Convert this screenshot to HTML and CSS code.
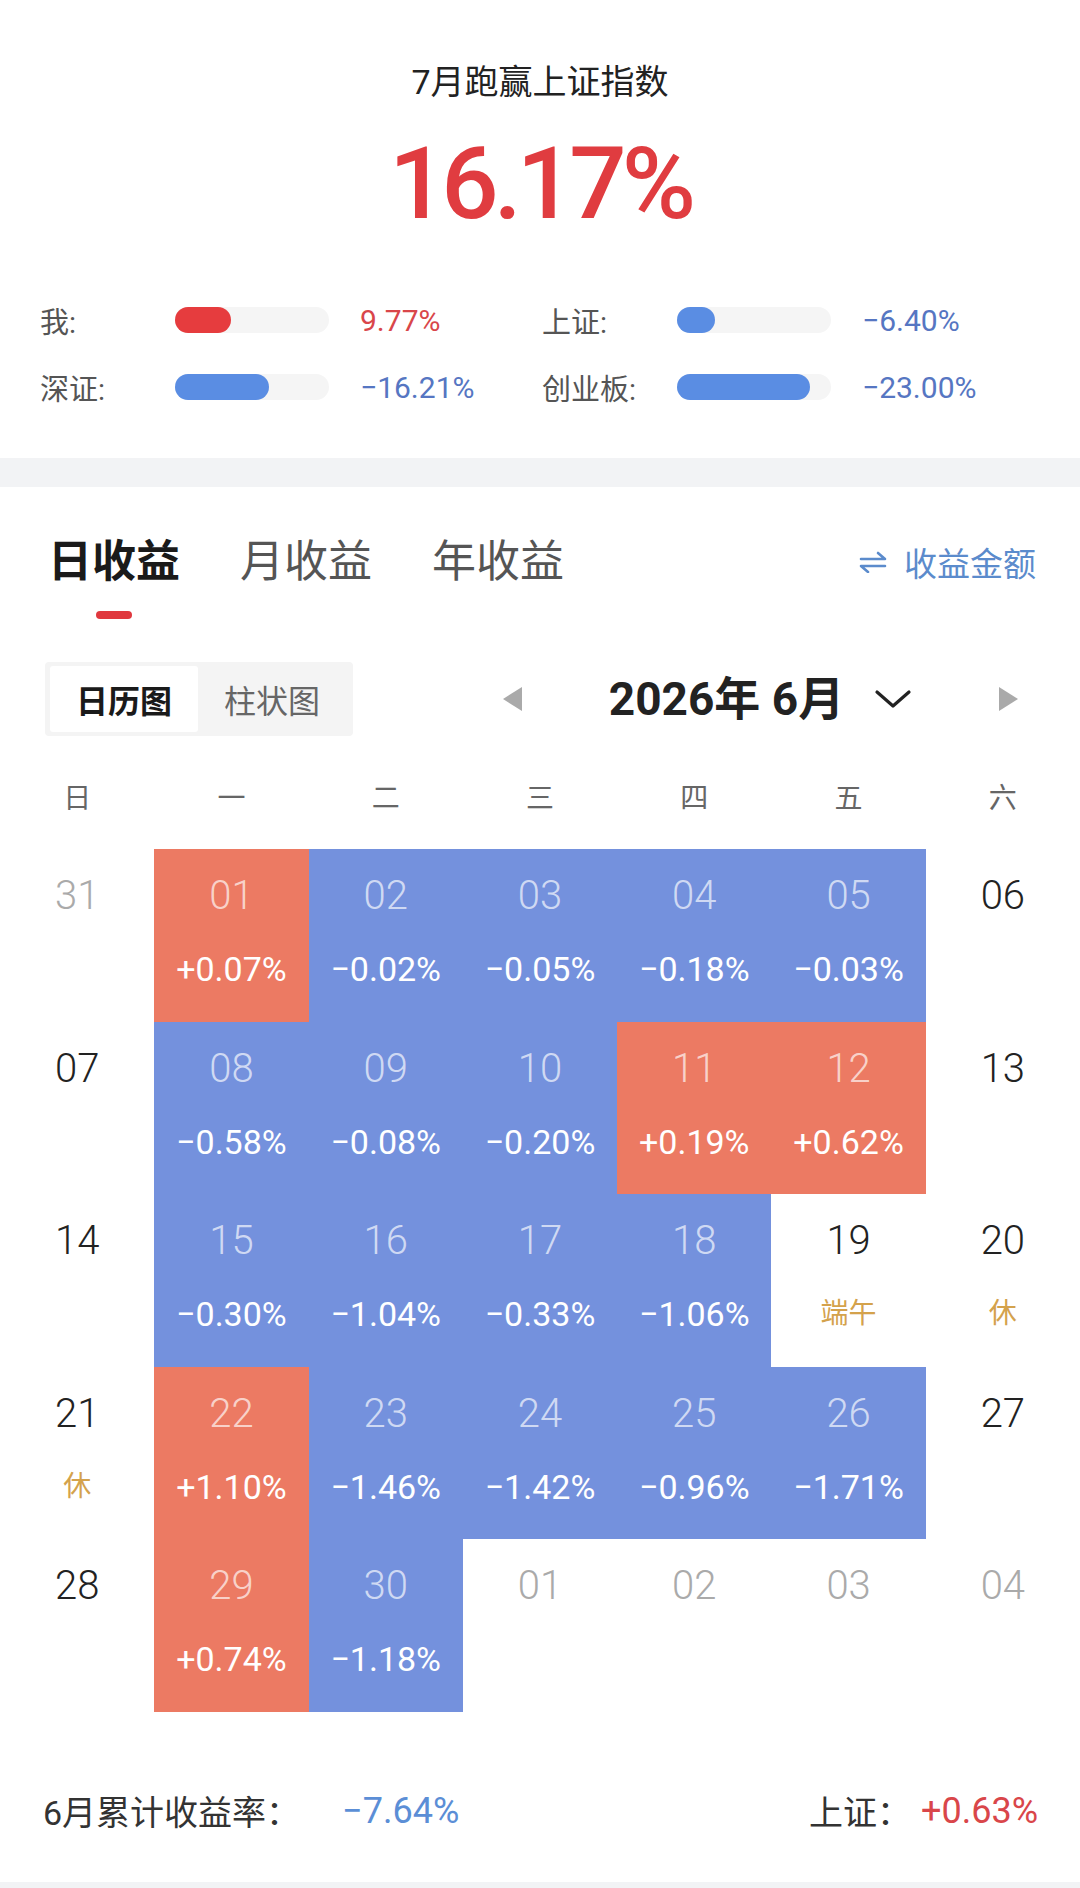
FILE: index.html
```html
<!DOCTYPE html>
<html lang="zh-CN">
<head>
<meta charset="utf-8">
<title>7月跑赢上证指数</title>
<link rel="stylesheet" href="styles.css">
</head>
<body>
<div class="page">
  <section class="summary">
    <div class="summary-title">7月跑赢上证指数</div>
    <div class="summary-value">16.17%</div>
    <div class="stats">
      <div class="stat">
        <span class="stat-label">我:</span>
        <span class="track"><span class="fill fill-red" style="width:56px"></span></span>
        <span class="stat-value up">9.77%</span>
      </div>
      <div class="stat">
        <span class="stat-label">上证:</span>
        <span class="track"><span class="fill fill-blue" style="width:38px"></span></span>
        <span class="stat-value down">−6.40%</span>
      </div>
      <div class="stat">
        <span class="stat-label">深证:</span>
        <span class="track"><span class="fill fill-blue" style="width:94px"></span></span>
        <span class="stat-value down">−16.21%</span>
      </div>
      <div class="stat">
        <span class="stat-label">创业板:</span>
        <span class="track"><span class="fill fill-blue" style="width:133px"></span></span>
        <span class="stat-value down">−23.00%</span>
      </div>
    </div>
  </section>

  <div class="band"></div>

  <section class="returns">
    <div class="tabs">
      <div class="tab tab-active">
        <span>日收益</span>
        <span class="tab-line"></span>
      </div>
      <div class="tab">月收益</div>
      <div class="tab">年收益</div>
      <div class="switch">
        <svg class="switch-icon" width="28" height="22" viewBox="0 0 28 22">
          <path d="M2 8 H26 L19 2" fill="none" stroke="#5b8bcc" stroke-width="2.6" stroke-linecap="round" stroke-linejoin="round"/>
          <path d="M26 15 H2 L9 21" fill="none" stroke="#5b8bcc" stroke-width="2.6" stroke-linecap="round" stroke-linejoin="round"/>
        </svg>
        <span>收益金额</span>
      </div>
    </div>

    <div class="toolbar">
      <div class="toggle">
        <span class="toggle-item toggle-on">日历图</span>
        <span class="toggle-item">柱状图</span>
      </div>
      <div class="month-nav">
        <svg width="19" height="24" viewBox="0 0 19 24"><path d="M19 0 V24 L0 12 Z" fill="#aaaaaa"/></svg>
        <div class="month-title">
          <span>2026年 6月</span>
          <svg width="38" height="20" viewBox="0 0 38 20"><path d="M3 3 L19 17 L35 3" fill="none" stroke="#222" stroke-width="3.2" stroke-linecap="round" stroke-linejoin="round"/></svg>
        </div>
        <svg width="19" height="24" viewBox="0 0 19 24"><path d="M0 0 V24 L19 12 Z" fill="#aaaaaa"/></svg>
      </div>
    </div>

    <div class="weekdays">
      <span>日</span><span>一</span><span>二</span><span>三</span><span>四</span><span>五</span><span>六</span>
    </div>

    <div class="calendar">
      <div class="cell"><span class="date muted">31</span></div>
      <div class="cell red"><span class="date">01</span><span class="pct">+0.07%</span></div>
      <div class="cell blue"><span class="date">02</span><span class="pct">−0.02%</span></div>
      <div class="cell blue"><span class="date">03</span><span class="pct">−0.05%</span></div>
      <div class="cell blue"><span class="date">04</span><span class="pct">−0.18%</span></div>
      <div class="cell blue"><span class="date">05</span><span class="pct">−0.03%</span></div>
      <div class="cell"><span class="date">06</span></div>

      <div class="cell"><span class="date">07</span></div>
      <div class="cell blue"><span class="date">08</span><span class="pct">−0.58%</span></div>
      <div class="cell blue"><span class="date">09</span><span class="pct">−0.08%</span></div>
      <div class="cell blue"><span class="date">10</span><span class="pct">−0.20%</span></div>
      <div class="cell red"><span class="date">11</span><span class="pct">+0.19%</span></div>
      <div class="cell red"><span class="date">12</span><span class="pct">+0.62%</span></div>
      <div class="cell"><span class="date">13</span></div>

      <div class="cell"><span class="date">14</span></div>
      <div class="cell blue"><span class="date">15</span><span class="pct">−0.30%</span></div>
      <div class="cell blue"><span class="date">16</span><span class="pct">−1.04%</span></div>
      <div class="cell blue"><span class="date">17</span><span class="pct">−0.33%</span></div>
      <div class="cell blue"><span class="date">18</span><span class="pct">−1.06%</span></div>
      <div class="cell"><span class="date">19</span><span class="holiday">端午</span></div>
      <div class="cell"><span class="date">20</span><span class="holiday">休</span></div>

      <div class="cell"><span class="date">21</span><span class="holiday">休</span></div>
      <div class="cell red"><span class="date">22</span><span class="pct">+1.10%</span></div>
      <div class="cell blue"><span class="date">23</span><span class="pct">−1.46%</span></div>
      <div class="cell blue"><span class="date">24</span><span class="pct">−1.42%</span></div>
      <div class="cell blue"><span class="date">25</span><span class="pct">−0.96%</span></div>
      <div class="cell blue"><span class="date">26</span><span class="pct">−1.71%</span></div>
      <div class="cell"><span class="date">27</span></div>

      <div class="cell"><span class="date">28</span></div>
      <div class="cell red"><span class="date">29</span><span class="pct">+0.74%</span></div>
      <div class="cell blue"><span class="date">30</span><span class="pct">−1.18%</span></div>
      <div class="cell"><span class="date muted">01</span></div>
      <div class="cell"><span class="date muted">02</span></div>
      <div class="cell"><span class="date muted">03</span></div>
      <div class="cell"><span class="date muted">04</span></div>
    </div>

    <div class="footer">
      <div class="footer-left">
        <span class="footer-label">6月累计收益率：</span>
        <span class="footer-value down-light">−7.64%</span>
      </div>
      <div class="footer-right">
        <span class="footer-label">上证：</span>
        <span class="footer-value up">+0.63%</span>
      </div>
    </div>
  </section>
  <div class="band band-bottom"></div>
</div>
</body>
</html>
```

FILE: styles.css
```css
* {
  box-sizing: border-box;
}

html, body {
  margin: 0;
  padding: 0;
  background: #ffffff;
}

body {
  font-family: Roboto, "Noto Sans CJK SC", sans-serif;
  color: #222222;
}

.page {
  width: 1080px;
  min-height: 1888px;
  display: flex;
  flex-direction: column;
}

/* ---------- summary ---------- */
.summary {
  height: 458px;
  padding-top: 60px;
  display: flex;
  flex-direction: column;
  align-items: center;
}

.summary-title {
  font-size: 34px;
  line-height: 44px;
  color: #222222;
}

.summary-value {
  margin-top: 20px;
  font-size: 101px;
  line-height: 120px;
  font-weight: 500;
  color: #e03c40;
  letter-spacing: -5px;
}

.stats {
  align-self: stretch;
  margin-top: 56px;
  padding-left: 40px;
  display: grid;
  grid-template-columns: 502px 1fr;
  row-gap: 27px;
}

.stat {
  display: flex;
  align-items: center;
  height: 40px;
}

.stat-label {
  width: 135px;
  font-size: 29px;
  color: #555555;
}

.track {
  width: 154px;
  height: 26px;
  border-radius: 13px;
  background: #f5f5f5;
  display: flex;
}

.fill {
  height: 26px;
  border-radius: 13px;
}

.fill-red {
  background: #e63c3e;
}

.fill-blue {
  background: #5a8de3;
}

.stat-value {
  margin-left: 31px;
  font-size: 30px;
}

.up {
  color: #d9464a;
}

.down {
  color: #5676c2;
}

.down-light {
  color: #5b8ed6;
}

/* ---------- bands ---------- */
.band {
  height: 29px;
  background: #f2f3f5;
}

.band-bottom {
  height: 6px;
  margin-top: auto;
}

/* ---------- returns ---------- */
.returns {
  padding-top: 45px;
}

.tabs {
  display: flex;
  align-items: flex-start;
  padding: 0 44px 0 48px;
  gap: 60px;
}

.tab {
  font-size: 44px;
  line-height: 60px;
  color: #555555;
  display: flex;
  flex-direction: column;
  align-items: center;
}

.tab-active {
  color: #1a1a1a;
  font-weight: 700;
}

.tab-line {
  margin-top: 19px;
  width: 36px;
  height: 8px;
  border-radius: 4px;
  background: #e0383e;
}

.switch {
  margin-left: auto;
  height: 60px;
  display: flex;
  align-items: center;
  gap: 17px;
  font-size: 33px;
  color: #5b8bcc;
}

.switch-icon {
  display: block;
}

.toolbar {
  margin-top: 43px;
  padding-left: 45px;
  display: flex;
  align-items: center;
}

.toggle {
  width: 308px;
  height: 74px;
  padding: 4px 5px;
  background: #f4f4f4;
  border-radius: 4px;
  display: flex;
}

.toggle-item {
  width: 148px;
  display: flex;
  align-items: center;
  justify-content: center;
  font-size: 32px;
  color: #666666;
  border-radius: 3px;
}

.toggle-on {
  background: #ffffff;
  color: #1a1a1a;
  font-weight: 700;
}

.month-nav {
  margin-left: 150px;
  width: 515px;
  display: flex;
  align-items: center;
  justify-content: space-between;
}

.month-nav svg {
  display: block;
}

.month-title {
  display: flex;
  align-items: center;
  gap: 30px;
  font-size: 46px;
  font-weight: 700;
  color: #222222;
  line-height: 60px;
}

.weekdays {
  margin-top: 30px;
  display: grid;
  grid-template-columns: repeat(7, 1fr);
  height: 60px;
  align-items: center;
  justify-items: center;
  font-size: 28px;
  color: #666666;
}

.calendar {
  margin-top: 23px;
  display: grid;
  grid-template-columns: repeat(7, 1fr);
  grid-auto-rows: 172.6px;
}

.cell {
  display: flex;
  flex-direction: column;
  align-items: center;
  padding-top: 22px;
}

.cell.red {
  background: #ec7a63;
}

.cell.blue {
  background: #7491dd;
}

.date {
  font-size: 40px;
  line-height: 50px;
  font-weight: 300;
  color: #222222;
}

.date.muted {
  color: #aaaaaa;
}

.red .date,
.blue .date {
  color: rgba(255, 255, 255, 0.68);
}

.pct {
  margin-top: 28px;
  font-size: 34px;
  line-height: 40px;
  font-weight: 400;
  color: #ffffff;
}

.holiday {
  margin-top: 28px;
  font-size: 28px;
  line-height: 40px;
  color: #d4a24c;
}

.footer {
  margin-top: 74px;
  padding: 0 42px 0 43px;
  height: 50px;
  display: flex;
  align-items: center;
  justify-content: space-between;
}

.footer-left,
.footer-right {
  display: flex;
  align-items: center;
}

.footer-label {
  font-size: 34px;
  color: #333333;
}

.footer-left .footer-value {
  margin-left: 42px;
}

.footer-right .footer-value {
  margin-left: 10px;
}

.footer-value {
  font-size: 36px;
  font-weight: 400;
}
```
